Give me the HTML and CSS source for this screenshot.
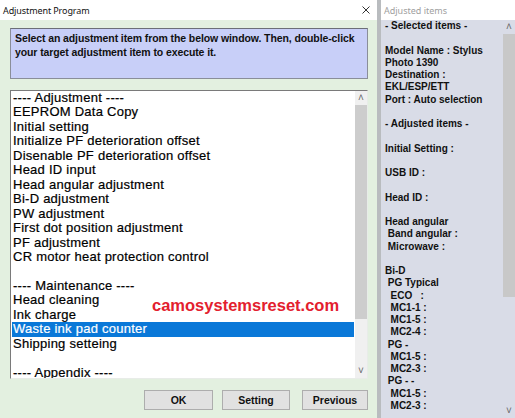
FILE: index.html
```html
<!DOCTYPE html>
<html lang="en">
  <head>
    <meta charset="UTF-8" />
    <title>Adjustment Program</title>
    <link rel="stylesheet" href="styles.css">
  </head>
  <body>
    <div class="desktop">
      <!-- main dialog -->
      <section class="window main-window">
        <header class="titlebar">
          <span class="title">Adjustment Program</span>
          <svg class="close" width="8" height="8" viewBox="0 0 8 8">
            <path d="M0.5 0.5 L7.5 7.5 M7.5 0.5 L0.5 7.5" stroke="#333" stroke-width="1" fill="none" />
          </svg>
        </header>
        <div class="main-body">
          <p class="hint">Select an adjustment item from the below window. Then, double-click<br>your target adjustment item to execute it.</p>

          <div class="listbox">
            <ul class="items">
              <li>---- Adjustment ----</li>
              <li>EEPROM Data Copy</li>
              <li>Initial setting</li>
              <li>Initialize PF deterioration offset</li>
              <li>Disenable PF deterioration offset</li>
              <li>Head ID input</li>
              <li>Head angular adjustment</li>
              <li>Bi-D adjustment</li>
              <li>PW adjustment</li>
              <li>First dot position adjustment</li>
              <li>PF adjustment</li>
              <li>CR motor heat protection control</li>
              <li>&nbsp;</li>
              <li>---- Maintenance ----</li>
              <li>Head cleaning</li>
              <li>Ink charge</li>
              <li class="selected">Waste ink pad counter</li>
              <li>Shipping setteing</li>
              <li>&nbsp;</li>
              <li>---- Appendix ----</li>
            </ul>
            <div class="scrollbar">
              <span class="arrow">&#708;</span>
              <span class="thumb list-thumb"></span>
              <span class="track"></span>
              <span class="arrow">&#709;</span>
            </div>
            <span class="watermark">camosystemsreset.com</span>
          </div>

          <div class="buttons">
            <button class="btn btn-ok">OK</button>
            <button class="btn btn-setting">Setting</button>
            <button class="btn btn-prev">Previous</button>
          </div>
        </div>
      </section>

      <!-- side panel -->
      <section class="window side-window">
        <header class="titlebar side-title">Adjusted items</header>
        <div class="side-body">
          <pre class="summary">- Selected items -

Model Name : Stylus
Photo 1390
Destination :
EKL/ESP/ETT
Port : Auto selection

- Adjusted items -

Initial Setting :

USB ID :

Head ID :

Head angular
 Band angular :
 Microwave :

Bi-D
 PG Typical
  ECO   :
  MC1-1 :
  MC1-5 :
  MC2-4 :
 PG -
  MC1-5 :
  MC2-3 :
 PG - -
  MC1-5 :
  MC2-3 :</pre>
          <div class="scrollbar side-scroll">
            <span class="arrow">&#708;</span>
            <span class="thumb side-thumb"></span>
            <span class="track"></span>
            <span class="arrow">&#709;</span>
          </div>
        </div>
      </section>
    </div>
  </body>
</html>
```

FILE: styles.css
```css
body {
  margin: 0;
  padding: 0;
  font-family: "Liberation Sans", Arial, sans-serif;
  overflow: hidden;
}

.desktop {
  display: flex;
  width: 515px;
  height: 418px;
  background-color: #b9bcbf;
  gap: 4px;
}

.window {
  display: flex;
  flex-direction: column;
  height: 100%;
}

.main-window {
  width: 377px;
  background-color: #e3f0e0;
}

.side-window {
  flex: 1;
  background-color: #dfece0;
}

.titlebar {
  height: 20px;
  flex: none;
  display: flex;
  align-items: center;
  justify-content: space-between;
  background-color: #fff;
  padding: 0 7px 0 3px;
}

.title {
  font-family: "Noto Sans", sans-serif;
  font-size: 9px;
  letter-spacing: -0.1px;
  color: #111;
}

.close {
  display: block;
}

.main-body {
  display: flex;
  flex-direction: column;
  padding: 8px 9px 0 10px;
}

.hint {
  margin: 0;
  height: 47px;
  padding: 2px 5px 0 4px;
  background-color: #c8cff8;
  border: 1px solid #8a8e99;
  border-top-color: #6c6f78;
  font-weight: bold;
  font-size: 10.5px;
  line-height: 14px;
  letter-spacing: -0.1px;
  color: #111;
}

/* list of adjustment items */
.listbox {
  position: relative;
  display: flex;
  margin-top: 11px;
  height: 287px;
  background-color: #fff;
  border: 1px solid #e8ece8;
  border-top-color: #7a7a7a;
  border-left-color: #7a7a7a;
  overflow: hidden;
}

.items {
  flex: 1;
  list-style: none;
  margin: 0;
  padding: 0 1px;
  font-size: 13px;
  line-height: 14.45px;
  letter-spacing: 0.25px;
  -webkit-text-stroke-width: 0.2px;
  color: #000;
}

.items li {
  padding-left: 1px;
  white-space: nowrap;
}

.items li.selected {
  background-color: #0a78d8;
  color: #fff;
}

.scrollbar {
  display: flex;
  flex-direction: column;
  width: 12px;
  background-color: #f0f0f0;
}

.arrow {
  height: 14px;
  flex: none;
  text-align: center;
  font-size: 10px;
  line-height: 14px;
  color: #666;
}

.thumb {
  flex: none;
  background-color: #cdcdcd;
}

.track {
  flex: 1;
}

.list-thumb {
  height: 214px;
}

.watermark {
  position: absolute;
  left: 141px;
  top: 205px;
  font-weight: bold;
  font-size: 16.5px;
  color: #e3202e;
}

.buttons {
  display: flex;
  justify-content: flex-end;
  margin-top: 11px;
}

.btn {
  height: 20px;
  padding: 0;
  font-family: "Liberation Sans", Arial, sans-serif;
  font-weight: bold;
  font-size: 10.5px;
  color: #111;
  background-color: #e1e1e1;
  border: 1px solid #adadad;
}

.btn-ok {
  width: 69px;
}

.btn-setting {
  width: 68px;
  margin-left: 9px;
}

.btn-prev {
  width: 66px;
  margin-left: 12px;
}

/* side panel */
.side-title {
  font-family: "Noto Sans", sans-serif;
  font-size: 9px;
  color: #a0a0a0;
  padding-left: 3px;
}

.side-body {
  flex: 1;
  display: flex;
  background-color: #d9dce7;
}

.summary {
  flex: 1;
  margin: 0;
  padding: 0 0 0 4px;
  font-family: "Liberation Sans", Arial, sans-serif;
  font-weight: bold;
  font-size: 10px;
  line-height: 12.25px;
  color: #111;
}

.side-scroll {
  background-color: #d9dce7;
}

.side-thumb {
  height: 263px;
  background-color: #c8c8c8;
}
```
